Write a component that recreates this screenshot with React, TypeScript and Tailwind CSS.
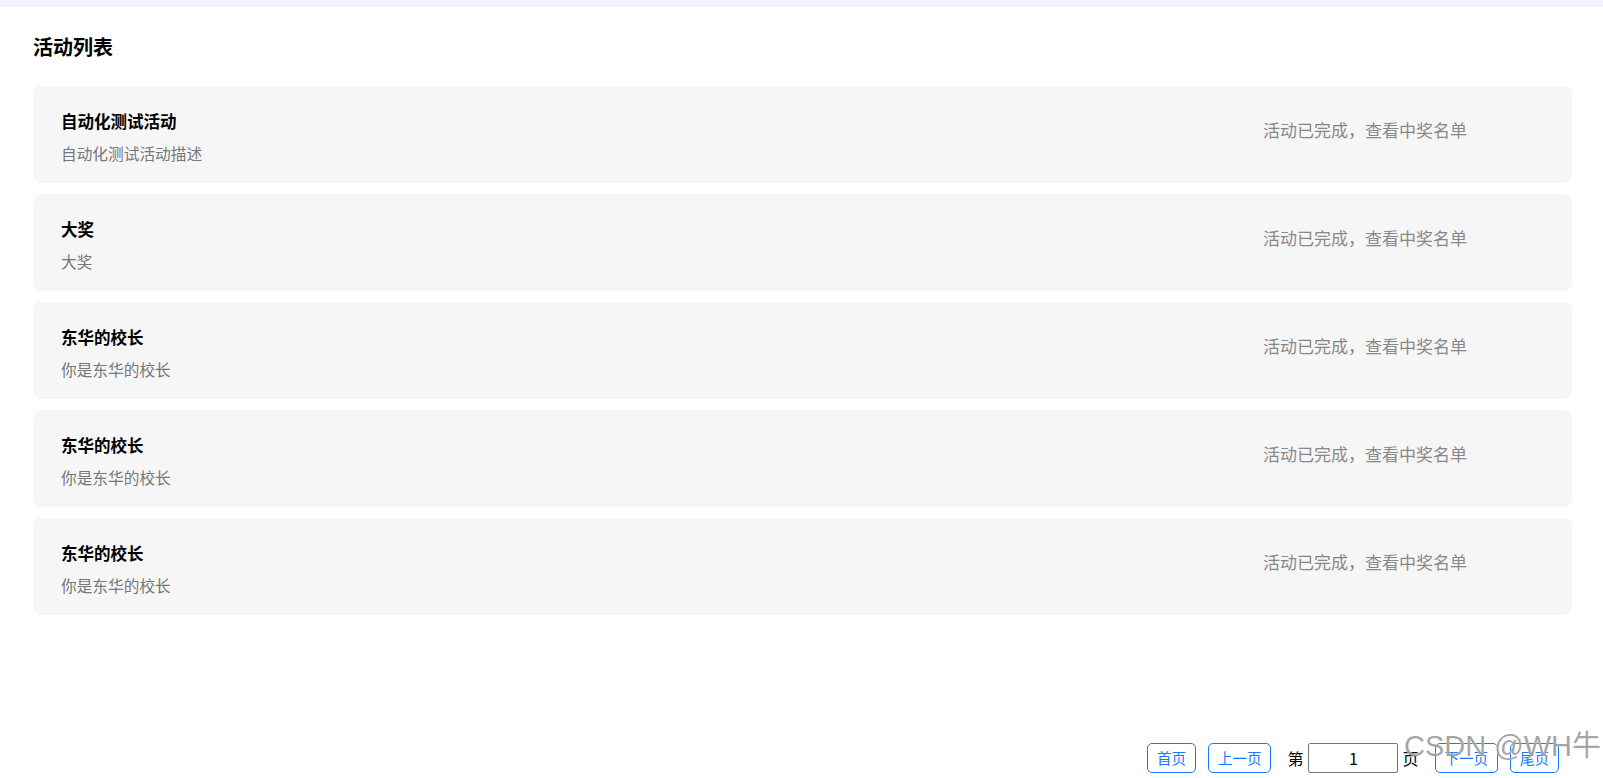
import React from "react";

interface Activity {
  name: string;
  desc: string;
}

const activities: Activity[] = [
  { name: "自动化测试活动", desc: "自动化测试活动描述" },
  { name: "大奖", desc: "大奖" },
  { name: "东华的校长", desc: "你是东华的校长" },
  { name: "东华的校长", desc: "你是东华的校长" },
  { name: "东华的校长", desc: "你是东华的校长" },
];

const PageButton: React.FC<{ label: string }> = ({ label }) => (
  <button className="h-[30px] px-[9px] border border-[#1677ff] rounded-[5px] bg-white text-[14.5px] leading-none text-[#1677ff]">
    {label}
  </button>
);

export default function App() {
  return (
    <div
      className="relative min-h-screen flex flex-col bg-white text-black"
      style={{ fontFamily: '"Noto Sans CJK SC", "Noto Sans", sans-serif' }}
    >
      {/* top strip */}
      <div className="h-[7px] bg-[#f0f4fa]" />

      <div className="px-[33px]">
        <h1 className="mt-[26px] mb-[25px] text-[20px] leading-[28px] font-bold">活动列表</h1>

        <div className="flex flex-col gap-[11px]">
          {activities.map((a, i) => (
            <div
              key={i}
              className="h-[97px] w-[1539px] rounded-lg bg-[#f6f6f6] flex items-center justify-between pl-[28px] pr-[105px]"
            >
              <div className="flex flex-col gap-[10px] mt-[5px]">
                <div className="text-[16.5px] leading-[24px] font-bold">{a.name}</div>
                <div className="text-[15.7px] leading-[22px] text-[#777]">{a.desc}</div>
              </div>
              <div className="mb-[10px] text-[17px] leading-[24px] text-[#888]">活动已完成，查看中奖名单</div>
            </div>
          ))}
        </div>
      </div>

      {/* pagination */}
      <div className="mt-auto mb-[5px] pr-[44px] flex items-center justify-end">
        <div className="flex items-center gap-[12px]">
          <PageButton label="首页" />
          <PageButton label="上一页" />
        </div>
        <div className="ml-[16px] flex items-center">
          <span className="text-[16px] leading-none">第</span>
          <input
            readOnly
            value="1"
            className="ml-[5px] w-[90px] h-[30px] border border-[#767676] rounded-[2px] text-center text-[16px] outline-none"
          />
          <span className="ml-[4px] text-[16px] leading-none">页</span>
        </div>
        <div className="ml-[16px] flex items-center gap-[12px]">
          <PageButton label="下一页" />
          <PageButton label="尾页" />
        </div>
      </div>

      {/* watermark */}
      <div
        className="absolute left-[1404px] top-[726px] pointer-events-none select-none text-[29px] leading-[40px] text-[rgba(105,105,105,0.6)] whitespace-nowrap"
        style={{ fontFamily: '"Liberation Sans", "Noto Sans CJK SC", sans-serif', textShadow: "0 0 1px #fff" }}
      >
        CSDN @WH牛
      </div>
    </div>
  );
}
